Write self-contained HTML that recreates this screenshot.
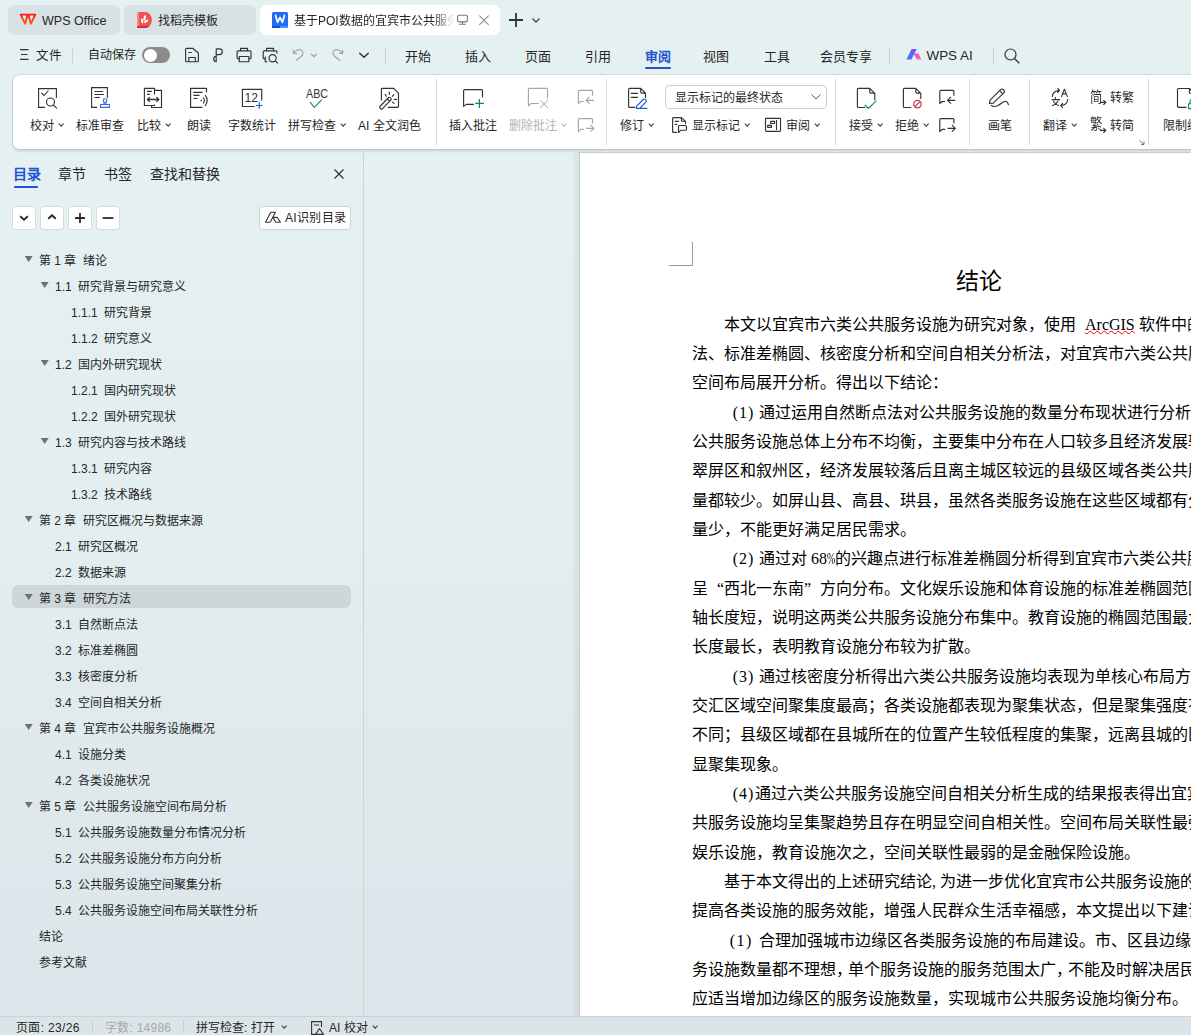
<!DOCTYPE html>
<html lang="zh-CN"><head><meta charset="utf-8">
<style>
*{box-sizing:border-box}
html,body{margin:0;padding:0}
body{width:1191px;height:1035px;overflow:hidden;position:relative;font-family:"Liberation Sans",sans-serif;color:#262626;background:linear-gradient(180deg,#e5f0f1 0px,#e4f0f1 160px,#e2eeef 500px,#e1ebed 670px,#dbe6eb 1010px,#dbe6eb 1035px)}
.a{position:absolute;white-space:nowrap}
.tab{position:absolute;top:5px;height:30px;border-radius:7px;background:#d8e1e4}
.t13{font-size:13px}
.t12{font-size:12px}
svg{position:absolute;overflow:visible}
.ic{fill:none;stroke:#333;stroke-width:1.1}
.rb .lb{position:absolute;font-size:12px;color:#262626;white-space:nowrap;top:117px;line-height:15px}
.chev{display:inline-block;width:4.4px;height:4.4px;border-right:1.5px solid #333;border-bottom:1.5px solid #333;transform:rotate(45deg);margin-left:5px;position:relative;top:-3.5px}
.sep{position:absolute;width:1px;background:#d9d9d9}
.toc{position:absolute;font-size:12px;color:#262626;white-space:nowrap;line-height:14px}
.tri{position:absolute;width:8px;height:6px;margin-left:-0.3px;background:#707070;clip-path:polygon(0 0,100% 0,50% 100%)}
.doc{position:absolute;font-family:"Liberation Serif",serif;font-size:16px;color:#000;white-space:nowrap;line-height:18px}
.pa{display:inline-block;font-family:"Liberation Serif",serif}
.sp{text-decoration:underline wavy #f00 1px;text-underline-offset:0px;margin-left:5px}
</style></head><body>

<!-- ===== title bar tabs ===== -->
<div class="tab" style="left:8px;width:112px"></div>
<div class="tab" style="left:124px;width:132px"></div>
<div class="tab" style="left:260px;width:240px;background:#fff"></div>

<!-- ===== quick access row ===== -->
<svg style="left:20px;top:14px" width="16" height="11" viewBox="0 0 16 11"><defs><linearGradient id="wg" x1="0" y1="0" x2="0" y2="1"><stop offset="0" stop-color="#ff1a1a"/><stop offset="1" stop-color="#ff5a10"/></linearGradient></defs><path d="M0.6 0.6H7.6L5.2 9.8ZM8.4 0.6H15.4L10.8 9.8Z" fill="none" stroke="url(#wg)" stroke-width="1.8" stroke-linejoin="round"/></svg>
<div class="a" style="left:42px;top:12.5px;font-size:12.5px;line-height:16px;color:#262626">WPS Office</div>
<svg style="left:130px;top:8px" width="30" height="24" viewBox="130 8 30 24"><path d="M137.1 12H145A6.9 7.95 0 0 1 145 27.9H137.1Z" fill="#ef5050"/><rect x="137.1" y="12" width="1.9" height="14" fill="#f58b8b"/><path d="M137.1 25.9H149.6A6.9 7.95 0 0 1 145 27.9H137.1Z" fill="#dc2b2b"/><g fill="#fff"><ellipse cx="144.7" cy="17.9" rx="1.15" ry="2.9" transform="rotate(15 144.7 17.9)"/><ellipse cx="142.1" cy="20.9" rx="1.05" ry="2.6" transform="rotate(-15 142.1 20.9)"/><ellipse cx="146.2" cy="21.2" rx="1.05" ry="2.6" transform="rotate(55 146.2 21.2)"/></g></svg>
<div class="a" style="left:158px;top:12.5px;font-size:12px;line-height:16px;color:#262626">找稻壳模板</div>
<svg style="left:266px;top:6px" width="30" height="26" viewBox="266 6 30 26"><rect x="272" y="12" width="16" height="16" rx="1.6" fill="#1f6ef4"/><path d="M272 26H280V28H273.6Q272 28 272 26.4Z" fill="#0a4ee2"/><path d="M280 26H288V26.4Q288 28 286.4 28H280Z" fill="#4b8efb"/><path d="M275.6 15.3L277.5 22.4L280 17.3L282.5 22.4L284.4 15.3" fill="none" stroke="#fff" stroke-width="1.7" stroke-linejoin="round" stroke-linecap="round"/></svg>
<div class="a" style="left:294px;top:12.5px;width:160px;overflow:hidden;font-size:12px;line-height:16px;color:#262626;-webkit-mask-image:linear-gradient(90deg,#000 140px,transparent 160px)">基于POI数据的宜宾市公共服务设施空间布局研究</div>
<svg style="left:450px;top:10px" width="45" height="20" viewBox="450 10 45 20" fill="none" stroke="#7a7a7a" stroke-width="1.1" stroke-linejoin="round" stroke-linecap="round"><rect x="457.6" y="15.3" width="9.8" height="6.6" rx="1.3"/><path d="M462.5 21.9V24.2M459.6 24.3H465.4"/><path d="M479.6 15.9L488.4 24.7M488.4 15.9L479.6 24.7" stroke="#8a8a8a" stroke-width="1.05"/></svg>

<svg style="left:509px;top:13px" width="14" height="14"><path d="M7 0V14M0 7H14" stroke="#333" stroke-width="1.8"/></svg>
<svg style="left:532px;top:18px" width="8" height="5"><path d="M0.5 0.5L4 4L7.5 0.5" fill="none" stroke="#444" stroke-width="1.3"/></svg>

<!-- row2 -->
<svg style="left:20px;top:49px" width="9" height="11"><path d="M0 0.6H8.5M1 5.5H7.5M0 10.4H8.5" stroke="#333" stroke-width="1.1"/></svg>
<div class="a" style="left:35.5px;top:47.5px;font-size:12.5px;line-height:16px">文件</div>
<div class="a" style="left:72px;top:47px;width:1px;height:16px;background:#c9d1d3"></div>
<div class="a" style="left:88px;top:47px;font-size:12px;line-height:16px">自动保存</div>
<div class="a" style="left:142px;top:47px;width:28px;height:16px;border-radius:8px;background:#8c8c8c"></div>
<div class="a" style="left:143.5px;top:48.5px;width:13px;height:13px;border-radius:50%;background:#fff"></div>
<svg style="left:180px;top:42px" width="100" height="26" viewBox="0 0 100 26" fill="none" stroke="#333" stroke-width="1.15" stroke-linejoin="round"><path d="M5.6 7.3Q5.6 6.3 6.6 6.3H12.6L18.4 11V18.7Q18.4 19.7 17.4 19.7H6.6Q5.6 19.7 5.6 18.7Z"/><path d="M8.4 10.5H11.8M8.8 19.7V15.5H15.3V19.7"/><path d="M36.2 6.8V19.7A2.5 2.7 0 1 1 36.2 14.3M36.2 6.8H39.4A2.9 2.9 0 0 1 39.4 12.6H36.2"/><path d="M60.6 8.8V6.3H67.5V8.8M59.4 16.8H58.2Q57.1 16.8 57.1 15.7V10Q57.1 8.8 58.3 8.8H69.8Q71 8.8 71 10V15.7Q71 16.8 69.9 16.8H68.8M59.3 14.5H68.8V19.7H59.3Z"/><path d="M86.6 8.8V6.3H93.5V8.8M85.3 16.8H84.3Q83.2 16.8 83.2 15.7V10Q83.2 8.8 84.4 8.8H95.8Q97 8.8 97 10V11.5M85.3 14.5V19.7H87.5"/><circle cx="92.6" cy="16.2" r="3.6"/><path d="M95.2 18.8L97.8 21.4"/></svg>



<svg style="left:285px;top:42px" width="90" height="26" viewBox="285 42 90 26" fill="none" stroke-width="1.15" stroke-linejoin="round" stroke-linecap="round"><path d="M294.3 52.2Q298 48.4 301.3 50.1Q304 52 302.2 55.5L296.1 60.5M293.3 50.1V53.3H296.5" stroke="#a3a3a3"/><path d="M311.4 54.3L314 56.6L316.6 54.3" stroke="#a3a3a3" stroke-width="1.3"/><path d="M341.7 52.2Q338 48.4 334.7 50.1Q332 52 333.8 55.5L339.9 60.5M342.7 50.1V53.3H339.5" stroke="#a3a3a3"/><path d="M359.7 53.2L364 57.3L368.3 53.2" stroke="#333" stroke-width="1.5"/></svg>
<div class="a" style="left:385px;top:47px;width:1px;height:17px;background:#c9d1d3"></div>
<div class="a" style="left:405px;top:48.5px;font-size:13px;line-height:16px">开始</div>
<div class="a" style="left:465px;top:48.5px;font-size:13px;line-height:16px">插入</div>
<div class="a" style="left:525px;top:48.5px;font-size:13px;line-height:16px">页面</div>
<div class="a" style="left:585px;top:48.5px;font-size:13px;line-height:16px">引用</div>
<div class="a" style="left:645px;top:48.5px;font-size:13px;line-height:16px;color:#1f55d0;font-weight:bold">审阅</div>
<div class="a" style="left:645px;top:67px;width:26px;height:2px;background:#2452c7;border-radius:1px"></div>
<div class="a" style="left:703px;top:48.5px;font-size:13px;line-height:16px">视图</div>
<div class="a" style="left:764px;top:48.5px;font-size:13px;line-height:16px">工具</div>
<div class="a" style="left:820px;top:48.5px;font-size:13px;line-height:16px">会员专享</div>
<div class="a" style="left:889px;top:47px;width:1px;height:17px;background:#c9d1d3"></div>
<svg style="left:900px;top:44px" width="26" height="20" viewBox="900 44 26 20"><defs><linearGradient id="ag1" x1="0" y1="1" x2="1" y2="0"><stop offset="0" stop-color="#3d7bff"/><stop offset="1" stop-color="#7a4dff"/></linearGradient><linearGradient id="ag2" x1="0" y1="0" x2="1" y2="1"><stop offset="0" stop-color="#e23cf0"/><stop offset="1" stop-color="#ff7a7a"/></linearGradient></defs><path d="M906.4 59.5L911.6 49.1H916.6L911.4 59.5Z" fill="url(#ag1)"/><path d="M913.6 53.4H918.3L921.6 59.5H916.9Z" fill="url(#ag2)"/></svg>
<div class="a" style="left:926.5px;top:47.5px;font-size:13.4px;line-height:16px">WPS AI</div>
<div class="a" style="left:993px;top:47px;width:1px;height:17px;background:#c9d1d3"></div>
<svg style="left:1004px;top:48px" width="16" height="16" viewBox="0 0 16 16"><circle cx="6.5" cy="6.5" r="5.5" fill="none" stroke="#333" stroke-width="1.2"/><path d="M10.5 10.5L15.4 15.4" stroke="#333" stroke-width="1.3"/></svg>


<!-- ===== ribbon ===== -->
<div class="a" style="left:13px;top:74.5px;width:1200px;height:74.5px;background:#fff;border-radius:6px;box-shadow:0 0 0 0.6px rgba(150,165,170,.45),0 1.5px 3px rgba(110,130,135,.28)"></div>
<div class="rb" id="ribbon"></div>
<svg style="left:455px;top:82px" width="520" height="55" viewBox="455 82 520 55" fill="none" stroke-width="1.15" stroke-linejoin="round">
<path d="M482.5 97.6V90.6Q482.5 89.6 481.5 89.6H464.6Q463.6 89.6 463.6 90.6V106.4L466.3 104.4H473.9" stroke="#333"/><path d="M479.4 99.1V107.9M475.2 103.4H484" stroke="#138a5a" stroke-width="1.3"/>
<path d="M547.5 98.5V89.4Q547.5 88.4 546.5 88.4H529.4Q528.4 88.4 528.4 89.4V105.8L531.1 103.5H538.8" stroke="#a6a6a6"/><path d="M540.3 100.3L547.7 107.7M547.7 100.3L540.3 107.7" stroke="#a6a6a6" stroke-width="1"/>
<g transform="translate(0 0)" stroke="#a6a6a6"><path d="M592.5 95.8V91.4Q592.5 90.4 591.5 90.4H579.4Q578.4 90.4 578.4 91.4V103.5L580.8 101.5H583.8"/><path d="M586.2 100.3H593.9M589.6 96.9L586.2 100.3L589.6 103.7"/><path d="M592.5 123.6V119.6Q592.5 118.6 591.5 118.6H579.4Q578.4 118.6 578.4 119.6V131.7L580.8 129.3H583.8"/><path d="M586.2 128.3H593.9M590.5 124.9L593.9 128.3L590.5 131.7"/></g><g transform="translate(361.4 0)" stroke="#333"><path d="M592.5 95.8V91.4Q592.5 90.4 591.5 90.4H579.4Q578.4 90.4 578.4 91.4V103.5L580.8 101.5H583.8"/><path d="M586.2 100.3H593.9M589.6 96.9L586.2 100.3L589.6 103.7"/><path d="M592.5 123.6V119.6Q592.5 118.6 591.5 118.6H579.4Q578.4 118.6 578.4 119.6V131.7L580.8 129.3H583.8"/><path d="M586.2 128.3H593.9M590.5 124.9L593.9 128.3L590.5 131.7"/></g>
</svg>
<div class="sep" style="left:436px;top:79px;height:66px"></div>
<div class="sep" style="left:606px;top:79px;height:66px"></div>
<div class="sep" style="left:835px;top:79px;height:66px"></div>
<div class="sep" style="left:969px;top:79px;height:66px"></div>
<div class="sep" style="left:1029px;top:79px;height:66px"></div>
<div class="sep" style="left:1148px;top:79px;height:66px"></div>
<svg style="left:37px;top:87px" width="22" height="22" viewBox="0 0 22 22"><path d="M8 20.4H1.6V1.6H19.4V11" fill="none" stroke="#333" stroke-width="1.1"/><path d="M4.5 6L7 8.5L11.5 3.5" fill="none" stroke="#333" stroke-width="1.1"/><circle cx="13.5" cy="15" r="4" fill="none" stroke="#333" stroke-width="1.1"/><path d="M16.4 17.9L19.8 21.3" stroke="#333" stroke-width="1.2"/></svg>
<div class="a" style="left:30px;top:118.5px;font-size:12px;line-height:15px;color:#262626">校对<span class="chev"></span></div>
<svg style="left:90px;top:86px" width="22" height="23" viewBox="0 0 22 23"><path d="M7 21.4H1.6V1.6H17.4V12" fill="none" stroke="#333" stroke-width="1.1"/><path d="M4.5 5.5H13M4.5 8.5H14M4.5 11.5H10" stroke="#333" stroke-width="1.1"/><circle cx="15" cy="14.5" r="1.8" fill="none" stroke="#2f6ae6" stroke-width="1.1"/><path d="M14 16.3V18H16V16.3M10.5 18.5H19.5V21.4H10.5Z" fill="none" stroke="#2f6ae6" stroke-width="1.1" stroke-linejoin="round"/></svg>
<div class="a" style="left:76px;top:118.5px;font-size:12px;line-height:15px;color:#262626">标准审查</div>
<svg style="left:143px;top:87px" width="21" height="22" viewBox="0 0 21 22" fill="none" stroke="#333" stroke-width="1.15" stroke-linejoin="round"><path d="M11.5 7.4V1.4H1.4V18.5H11.5V17.6M11.5 3.4H18.5V20.5H8.5V18.6"/><path d="M4.1 4.4H8.8M4.1 7.4H6.8"/><path d="M4.4 12.5H15.8M6.8 10.1L4.4 12.5L6.8 14.9M13.4 10.1L15.8 12.5L13.4 14.9" stroke-width="1.3"/></svg>
<div class="a" style="left:137px;top:118.5px;font-size:12px;line-height:15px;color:#262626">比较<span class="chev"></span></div>
<svg style="left:190px;top:87px" width="20" height="22" viewBox="0 0 20 22" fill="none" stroke="#333" stroke-width="1.15" stroke-linejoin="round"><path d="M16.5 5.4V1.4H0.6V20.4H12.5"/><path d="M3.4 5.4H12.5M3.4 8.4H9.5M3.4 11.5H7.5"/><circle cx="11.2" cy="13.5" r="0.8" fill="#333" stroke="none"/><path d="M13.2 10.4Q15.6 13.4 13.2 16.5M15.2 8.1Q19.2 13.4 15.2 18.8"/></svg>
<div class="a" style="left:187px;top:118.5px;font-size:12px;line-height:15px;color:#262626">朗读</div>
<svg style="left:241px;top:88px" width="23" height="22" viewBox="0 0 23 22"><path d="M13.7 18.5H1.4V1.4H20.7V12.5" fill="none" stroke="#333" stroke-width="1.15"/><text x="3.4" y="14.2" font-family="Liberation Sans" font-size="13.5" fill="#333" textLength="13.6" lengthAdjust="spacingAndGlyphs">12</text><path d="M18.3 14.2V20.8M15 17.5H21.6" stroke="#1f5de0" stroke-width="1.2"/></svg>
<div class="a" style="left:228px;top:118.5px;font-size:12px;line-height:15px;color:#262626">字数统计</div>
<svg style="left:305px;top:87px" width="24" height="22" viewBox="0 0 24 22"><text x="1.0" y="11.4" font-family="Liberation Sans" font-size="12.6" fill="#333" textLength="22" lengthAdjust="spacingAndGlyphs">ABC</text><path d="M5.1 15.2L9.3 20.4L16.9 12.6" fill="none" stroke="#1f8f64" stroke-width="1.2"/></svg>
<div class="a" style="left:288px;top:118.5px;font-size:12px;line-height:15px;color:#262626">拼写检查<span class="chev"></span></div>
<svg style="left:370px;top:82px" width="40" height="30" viewBox="0 0 40 30" fill="none" stroke="#333" stroke-width="1.15" stroke-linejoin="round" stroke-linecap="round"><path d="M11.4 18V7.3Q11.4 6.4 12.3 6.4H23.8L28.5 11.1V24.4Q28.5 25.3 27.6 25.3H18.2"/><path d="M9.9 24.5L18.6 15.5Q19.4 14.9 20.1 15.6L21 16.5Q21.6 17.2 21 17.9L12.3 26.8Q11.5 27.5 10.8 26.8L9.9 25.9Q9.3 25.2 9.9 24.5Z"/><path d="M17.4 17L19.6 19.2"/><path d="M19.3 10.1V12.5M15.1 12.4L16.4 14.2M22.3 14.4L23.9 12.5M24.3 17.4H26.6M22.4 20.1L24 21.4"/></svg>
<div class="a" style="left:358px;top:118.5px;font-size:12px;line-height:15px;color:#262626">AI 全文润色</div>

<div class="a" style="left:449px;top:118.5px;font-size:12px;line-height:15px;color:#262626">插入批注</div>

<div class="a" style="left:509px;top:118.5px;font-size:12px;line-height:15px;color:#b3b3b3">删除批注<span class="chev" style="border-color:#bbb"></span></div>


<svg style="left:620px;top:82px" width="40" height="30" viewBox="620 82 40 30" fill="none" stroke-width="1.15" stroke-linejoin="round" stroke-linecap="round"><path d="M634.8 107.4H629.6Q628.6 107.4 628.6 106.4V89.4Q628.6 88.4 629.6 88.4H640.7L645.5 93.2V97.4M640.7 88.6V92.1Q640.7 93.1 641.7 93.1H645.3" stroke="#333"/><path d="M631.2 93.4H637.6M631.2 97.4H637.6" stroke="#333"/><path d="M636.4 108.4V106.4L643.3 99.5Q644.4 98.5 645.5 99.5L645.9 99.9Q646.8 101 645.9 102L639.6 108.4ZM636.4 108.4H646.9" stroke="#1f5de0"/></svg>
<div class="a" style="left:620px;top:118.5px;font-size:12px;line-height:15px;color:#262626">修订<span class="chev"></span></div>
<div class="a" style="left:665px;top:85px;width:162px;height:24px;border:1px solid #cfcfcf;border-radius:4px;background:#fff"></div>
<div class="a" style="left:675px;top:90.5px;font-size:12px;line-height:15px">显示标记的最终状态</div>
<svg style="left:811px;top:94px" width="10" height="6"><path d="M0.5 0.5L5 5L9.5 0.5" fill="none" stroke="#555" stroke-width="1"/></svg>
<svg style="left:668px;top:112px" width="24" height="25" viewBox="668 112 24 25" fill="none" stroke="#333" stroke-width="1.15" stroke-linejoin="round" stroke-linecap="round"><path d="M676.6 132.4H673.6Q672.6 132.4 672.6 131.4V118.6Q672.6 117.6 673.6 117.6H681.4L685.5 121.4V123.4M681.4 117.8V120.2Q681.4 121.2 682.4 121.2H685.3"/><path d="M675.2 121.4H678.6M675.2 124.4H676.7"/><path d="M678.5 132.5V126.5Q678.5 125.5 679.5 125.5H685.5Q686.5 125.5 686.5 126.5V129.2Q686.5 130.2 685.5 130.2H681Z"/></svg>
<div class="a" style="left:692px;top:118.5px;font-size:12px;line-height:15px;color:#262626">显示标记<span class="chev"></span></div>
<svg style="left:760px;top:112px" width="30" height="25" viewBox="760 112 30 25" fill="none" stroke="#333" stroke-width="1.15" stroke-linejoin="round" stroke-linecap="round"><rect x="765.5" y="118.4" width="15" height="12.9" rx="0.8"/><rect x="770.6" y="121.4" width="4" height="2.1" rx="0.3"/><rect x="767.6" y="125.4" width="3.9" height="2" rx="0.3"/><path d="M776.5 120.6V129.4"/></svg>
<div class="a" style="left:786px;top:118.5px;font-size:12px;line-height:15px;color:#262626">审阅<span class="chev"></span></div>
<svg style="left:850px;top:84px" width="80" height="28" viewBox="850 84 80 28" fill="none" stroke-width="1.15" stroke-linejoin="round" stroke-linecap="round"><path d="M864.8 107.5H858.4Q857.4 107.5 857.4 106.5V89.4Q857.4 88.4 858.4 88.4H869.8L874.8 93.3V99.8M869.8 88.6V92.1Q869.8 93.1 870.8 93.1H874.6" stroke="#333"/><path d="M865.1 105.2L868.5 108.3L876 101.1" stroke="#1f8f64" stroke-width="1.3"/><path d="M910.8 107.5H904.4Q903.4 107.5 903.4 106.5V89.4Q903.4 88.4 904.4 88.4H915.8L920.8 93.3V98.4M915.8 88.6V92.1Q915.8 93.1 916.8 93.1H920.6" stroke="#333"/><circle cx="917.5" cy="104.1" r="3.7" stroke="#d23a52" stroke-width="1.3"/><path d="M915 106.6L920 101.6" stroke="#d23a52" stroke-width="1.3"/></svg>
<div class="a" style="left:849px;top:118.5px;font-size:12px;line-height:15px;color:#262626">接受<span class="chev"></span></div>

<div class="a" style="left:895px;top:118.5px;font-size:12px;line-height:15px;color:#262626">拒绝<span class="chev"></span></div>


<svg style="left:984px;top:84px" width="30" height="26" viewBox="984 84 30 26" fill="none" stroke="#333" stroke-width="1.15" stroke-linejoin="round" stroke-linecap="round"><path d="M989.4 103.5L990.1 100.2L1000.3 89.9Q1002 88.3 1003.7 89.9Q1005.2 91.5 1003.6 93.2L993.3 103.1Z"/><path d="M1000.1 91.1L1002.3 93.3"/><path d="M991.3 105.4Q994 107 997 106Q999.5 105 1002 102.8Q1004.5 100.8 1006.3 101.5Q1007.8 102.3 1008.4 104.6"/></svg>
<div class="a" style="left:988px;top:118.5px;font-size:12px;line-height:15px;color:#262626">画笔</div>
<svg style="left:1045px;top:84px" width="30" height="26" viewBox="1045 84 30 26" fill="none" stroke="#333" stroke-width="1.1" stroke-linejoin="round" stroke-linecap="round"><path d="M1061.4 96.6L1064.4 89.3L1067.4 96.6M1062.5 93.9H1066.3"/><path d="M1055.4 97.4V98.6M1052.1 99.6H1059.7M1053.3 101.2Q1055.5 104.5 1058.6 105.6M1058 101.2Q1056 104.5 1052.4 105.6"/><path d="M1052.4 96.6Q1052.6 91 1059.3 90.4M1057.6 88.4L1059.6 90.4L1057.6 92.5"/><path d="M1067.7 99.3Q1067.6 105 1060.8 105.6M1062.6 103.5L1060.6 105.6L1062.6 107.6"/></svg>
<div class="a" style="left:1043px;top:118.5px;font-size:12px;line-height:15px;color:#262626">翻译<span class="chev"></span></div>

<div class="a" style="left:1089.5px;top:88.5px;font-size:14.5px;line-height:17px;transform:scaleX(.85);transform-origin:0 0;color:#333">简</div><div class="a" style="left:1089.5px;top:116px;font-size:14.5px;line-height:17px;transform:scaleX(.85);transform-origin:0 0;color:#333">繁</div><svg style="left:1095px;top:95px" width="15" height="40" viewBox="1095 95 15 40" fill="none" stroke="#333" stroke-width="1.1" stroke-linecap="round" stroke-linejoin="round"><path d="M1100.4 102.4H1105.8M1103.7 100.3L1105.8 102.4L1103.7 104.5"/><path d="M1100.4 130.4H1105.8M1103.7 128.3L1105.8 130.4L1103.7 132.5"/></svg>
<div class="a" style="left:1110px;top:91px;font-size:12px;line-height:15px">转繁</div>


<div class="a" style="left:1110px;top:118.5px;font-size:12px;line-height:15px">转简</div>
<svg style="left:1139px;top:140px" width="6" height="5"><path d="M0.5 0.5L5 4.5M5 1.5V4.5H2" fill="none" stroke="#666" stroke-width="0.9"/></svg>
<svg style="left:1170px;top:84px" width="21" height="28" viewBox="1170 84 21 28" fill="none" stroke-width="1.15" stroke-linejoin="round"><path d="M1186.6 107.3H1178.5Q1177.5 107.3 1177.5 106.3V89.5Q1177.5 88.5 1178.5 88.5H1189.4L1194 93.2M1189.4 88.7V92.2Q1189.4 93.2 1190.4 93.2H1194" stroke="#333"/><path d="M1188.6 103.7H1197V108.6H1188.6ZM1190 103.7V101.5Q1190 99.3 1192.5 99.3Q1195 99.3 1195 101.5V103.7" stroke="#138a5a"/></svg>
<div class="a" style="left:1163px;top:118.5px;font-size:12px;line-height:15px;color:#262626">限制编辑</div>

<!-- ===== left panel ===== -->
<div class="a" style="left:13px;top:166px;font-size:14px;line-height:16px;color:#1f55d0;font-weight:bold">目录</div>
<div class="a" style="left:14px;top:185.5px;width:24px;height:2px;border-radius:1px;background:#1f55d0"></div>
<div class="a" style="left:58px;top:166px;font-size:14px;line-height:16px">章节</div>
<div class="a" style="left:104px;top:166px;font-size:14px;line-height:16px">书签</div>
<div class="a" style="left:150px;top:166px;font-size:14px;line-height:16px">查找和替换</div>
<svg style="left:334px;top:169px" width="10" height="10"><path d="M0.5 0.5L9.5 9.5M9.5 0.5L0.5 9.5" stroke="#333" stroke-width="1.2"/></svg>
<div class="a" style="left:12px;top:206px;width:24px;height:24px;background:#fff;border:1px solid #d5dadb;border-radius:3px"></div>
<div class="a" style="left:40px;top:206px;width:24px;height:24px;background:#fff;border:1px solid #d5dadb;border-radius:3px"></div>
<div class="a" style="left:68px;top:206px;width:24px;height:24px;background:#fff;border:1px solid #d5dadb;border-radius:3px"></div>
<div class="a" style="left:96px;top:206px;width:24px;height:24px;background:#fff;border:1px solid #d5dadb;border-radius:3px"></div>
<svg style="left:19px;top:215px" width="10" height="6"><path d="M1.2 1.2L5 4.8L8.8 1.2" fill="none" stroke="#2b2b2b" stroke-width="1.9"/></svg>
<svg style="left:47px;top:214px" width="10" height="6"><path d="M1.2 4.8L5 1.2L8.8 4.8" fill="none" stroke="#2b2b2b" stroke-width="1.9"/></svg>
<svg style="left:74px;top:212px" width="12" height="12"><path d="M6 1V11M1 6H11" fill="none" stroke="#2b2b2b" stroke-width="1.8"/></svg>
<svg style="left:102px;top:212px" width="12" height="12"><path d="M0.6 6H11.4" fill="none" stroke="#2b2b2b" stroke-width="1.8"/></svg>
<div class="a" style="left:259px;top:206px;width:92px;height:24px;background:#fff;border:1px solid #cdd4d6;border-radius:4px"></div>
<svg style="left:258px;top:204px" width="30" height="26" viewBox="258 204 30 26" fill="none" stroke="#333" stroke-width="1.1" stroke-linejoin="round"><path d="M265.5 222.3L270.4 213Q270.9 212.3 271.7 212.3H275.4L270.6 221.5Q270.1 222.3 269.3 222.3Z"/><path d="M273 217.4H276.6Q277.3 217.4 277.7 218L280.4 222.3H276.6Q275.9 222.3 275.5 221.7Z"/></svg>
<div class="a" style="left:285px;top:211px;font-size:12px;line-height:15px;letter-spacing:.3px">AI识别目录</div>
<div class="a" style="left:12px;top:585px;width:339px;height:23px;border-radius:6px;background:#cdd6d9"></div>
<div class="tri" style="left:25px;top:256px"></div>
<div class="toc" style="left:39px;top:253.5px">第 1 章&nbsp; 绪论</div>
<div class="tri" style="left:41px;top:282px"></div>
<div class="toc" style="left:55px;top:279.5px">1.1&nbsp; 研究背景与研究意义</div>
<div class="toc" style="left:71px;top:305.5px">1.1.1&nbsp; 研究背景</div>
<div class="toc" style="left:71px;top:331.5px">1.1.2&nbsp; 研究意义</div>
<div class="tri" style="left:41px;top:360px"></div>
<div class="toc" style="left:55px;top:357.5px">1.2&nbsp; 国内外研究现状</div>
<div class="toc" style="left:71px;top:383.5px">1.2.1&nbsp; 国内研究现状</div>
<div class="toc" style="left:71px;top:409.5px">1.2.2&nbsp; 国外研究现状</div>
<div class="tri" style="left:41px;top:438px"></div>
<div class="toc" style="left:55px;top:435.5px">1.3&nbsp; 研究内容与技术路线</div>
<div class="toc" style="left:71px;top:461.5px">1.3.1&nbsp; 研究内容</div>
<div class="toc" style="left:71px;top:487.5px">1.3.2&nbsp; 技术路线</div>
<div class="tri" style="left:25px;top:516px"></div>
<div class="toc" style="left:39px;top:513.5px">第 2 章&nbsp; 研究区概况与数据来源</div>
<div class="toc" style="left:55px;top:539.5px">2.1&nbsp; 研究区概况</div>
<div class="toc" style="left:55px;top:565.5px">2.2&nbsp; 数据来源</div>
<div class="tri" style="left:25px;top:594px"></div>
<div class="toc" style="left:39px;top:591.5px">第 3 章&nbsp; 研究方法</div>
<div class="toc" style="left:55px;top:617.5px">3.1&nbsp; 自然断点法</div>
<div class="toc" style="left:55px;top:643.5px">3.2&nbsp; 标准差椭圆</div>
<div class="toc" style="left:55px;top:669.5px">3.3&nbsp; 核密度分析</div>
<div class="toc" style="left:55px;top:695.5px">3.4&nbsp; 空间自相关分析</div>
<div class="tri" style="left:25px;top:724px"></div>
<div class="toc" style="left:39px;top:721.5px">第 4 章&nbsp; 宜宾市公共服务设施概况</div>
<div class="toc" style="left:55px;top:747.5px">4.1&nbsp; 设施分类</div>
<div class="toc" style="left:55px;top:773.5px">4.2&nbsp; 各类设施状况</div>
<div class="tri" style="left:25px;top:802px"></div>
<div class="toc" style="left:39px;top:799.5px">第 5 章&nbsp; 公共服务设施空间布局分析</div>
<div class="toc" style="left:55px;top:825.5px">5.1&nbsp; 公共服务设施数量分布情况分析</div>
<div class="toc" style="left:55px;top:851.5px">5.2&nbsp; 公共服务设施分布方向分析</div>
<div class="toc" style="left:55px;top:877.5px">5.3&nbsp; 公共服务设施空间聚集分析</div>
<div class="toc" style="left:55px;top:903.5px">5.4&nbsp; 公共服务设施空间布局关联性分析</div>
<div class="toc" style="left:39px;top:929.5px">结论</div>
<div class="toc" style="left:39px;top:955.5px">参考文献</div>
<div class="a" style="left:363px;top:150px;width:1px;height:866px;background:#cfd3d4"></div>

<!-- ===== page ===== -->
<div class="a" style="left:571px;top:152px;width:8px;height:864px;background:linear-gradient(90deg,rgba(110,130,135,0),rgba(110,130,135,.13))"></div><div class="a" style="left:579px;top:152px;width:700px;height:864px;background:#fff;border-left:1px solid #c9cbcc;border-top:1px solid #c9cbcc"></div>


<!-- doc text -->
<div class="a" style="left:669px;top:242px;width:24px;height:24px;border-right:1px solid #9a9a9a;border-bottom:1px solid #9a9a9a"></div>
<div class="a" style="left:956px;top:268.5px;font-size:23px;line-height:25px;color:#000">结论</div>
<div class="doc" style="left:724px;top:315.75px">本文以宜宾市六类公共服务设施为研究对象，使用 <span class=sp>ArcGIS</span> 软件中的自然断点</div>
<div class="doc" style="left:692px;top:345.08px">法、标准差椭圆、核密度分析和空间自相关分析法，对宜宾市六类公共服务设施</div>
<div class="doc" style="left:692px;top:374.42px">空间布局展开分析。得出以下结论：</div>
<div class="doc" style="left:724px;top:403.75px"><span class="pa" style="width:14px;text-align:right">(</span><span class="pa" style="width:10px;text-align:center">1</span><span class="pa" style="width:11px;text-align:left">)</span>通过运用自然断点法对公共服务设施的数量分布现状进行分析，得出</div>
<div class="doc" style="left:692px;top:433.08px">公共服务设施总体上分布不均衡，主要集中分布在人口较多且经济发展较好的</div>
<div class="doc" style="left:692px;top:462.41px">翠屏区和叙州区，经济发展较落后且离主城区较远的县级区域各类公共服务设施</div>
<div class="doc" style="left:692px;top:491.75px">量都较少。如屏山县、高县、珙县，虽然各类服务设施在这些区域都有分布但数</div>
<div class="doc" style="left:692px;top:521.08px">量少，不能更好满足居民需求。</div>
<div class="doc" style="left:724px;top:550.41px"><span class="pa" style="width:14px;text-align:right">(</span><span class="pa" style="width:10px;text-align:center">2</span><span class="pa" style="width:11px;text-align:left">)</span>通过对 68<span class="pa" style="width:8px;transform:scaleX(.62);transform-origin:0 50%">%</span>的兴趣点进行标准差椭圆分析得到宜宾市六类公共服务设施</div>
<div class="doc" style="left:692px;top:579.75px">呈<span class="pa" style="width:16px;text-align:right;font-family:'Liberation Serif',serif">“</span>西北一东南<span class="pa" style="width:16px;text-align:left;font-family:'Liberation Serif',serif">”</span>方向分布。文化娱乐设施和体育设施的标准差椭圆范围小，</div>
<div class="doc" style="left:692px;top:609.08px">轴长度短，说明这两类公共服务设施分布集中。教育设施的椭圆范围最大，</div>
<div class="doc" style="left:692px;top:638.41px">长度最长，表明教育设施分布较为扩散。</div>
<div class="doc" style="left:724px;top:667.75px"><span class="pa" style="width:14px;text-align:right">(</span><span class="pa" style="width:10px;text-align:center">3</span><span class="pa" style="width:11px;text-align:left">)</span>通过核密度分析得出六类公共服务设施均表现为单核心布局方式，</div>
<div class="doc" style="left:692px;top:697.08px">交汇区域空间聚集度最高；各类设施都表现为聚集状态，但是聚集强度有所</div>
<div class="doc" style="left:692px;top:726.41px">不同；县级区域都在县城所在的位置产生较低程度的集聚，远离县城的区域</div>
<div class="doc" style="left:692px;top:755.75px">显聚集现象。</div>
<div class="doc" style="left:724px;top:785.08px"><span class="pa" style="width:14px;text-align:right">(</span><span class="pa" style="width:10px;text-align:center">4</span><span class="pa" style="width:7px;text-align:left">)</span>通过六类公共服务设施空间自相关分析生成的结果报表得出宜宾市</div>
<div class="doc" style="left:692px;top:814.41px">共服务设施均呈集聚趋势且存在明显空间自相关性。空间布局关联性最强的</div>
<div class="doc" style="left:692px;top:843.74px">娱乐设施，教育设施次之，空间关联性最弱的是金融保险设施。</div>
<div class="doc" style="left:724px;top:873.08px">基于本文得出的上述研究结论<span class="pa" style="width:8px">,</span>为进一步优化宜宾市公共服务设施的布局，</div>
<div class="doc" style="left:692px;top:902.41px">提高各类设施的服务效能，增强人民群众生活幸福感，本文提出以下建议：</div>
<div class="doc" style="left:724px;top:931.74px"><span class="pa" style="width:11px;text-align:right">(</span><span class="pa" style="width:11px;text-align:center">1</span><span class="pa" style="width:13px;text-align:left">)</span>合理加强城市边缘区各类服务设施的布局建设。市、区县边缘地区</div>
<div class="doc" style="left:692px;top:961.08px">务设施数量都不理想<span class="pa" style="width:12px;overflow:hidden;vertical-align:top">，</span>单个服务设施的服务范围太广<span class="pa" style="width:12px;overflow:hidden;vertical-align:top">，</span>不能及时解决居民</div>
<div class="doc" style="left:692px;top:990.41px">应适当增加边缘区的服务设施数量，实现城市公共服务设施均衡分布。</div>
<!-- ===== status bar ===== -->
<div class="a" style="left:0;top:1016px;width:1191px;height:19px;background:#dbe5e9;border-top:1px solid #c9d2d5"></div>
<div class="a" style="left:16px;top:1021px;font-size:12px;line-height:15px;letter-spacing:.35px">页面: 23/26</div>
<div class="a" style="left:92px;top:1020px;width:1px;height:13px;background:#c5ced1"></div>
<div class="a" style="left:105px;top:1021px;font-size:12px;line-height:15px;letter-spacing:.25px;color:#a3a9ab">字数: 14986</div>
<div class="a" style="left:183px;top:1020px;width:1px;height:13px;background:#c5ced1"></div>
<div class="a" style="left:196px;top:1021px;font-size:12px;line-height:15px">拼写检查: 打开<span class="chev" style="margin-left:7px"></span></div>
<svg style="left:311px;top:1021px" width="13" height="14" viewBox="0 0 13 14"><path d="M5 13.4H0.6V0.6H10.5V6" fill="none" stroke="#333" stroke-width="1.1"/><path d="M3 4H8" stroke="#333" stroke-width="1"/><path d="M8.5 7.5L12.5 13.4H4.5Z" fill="none" stroke="#333" stroke-width="1.1" stroke-linejoin="round"/></svg>
<div class="a" style="left:329px;top:1021px;font-size:12px;line-height:15px">AI 校对<span class="chev" style="margin-left:5px"></span></div>


</body></html>
